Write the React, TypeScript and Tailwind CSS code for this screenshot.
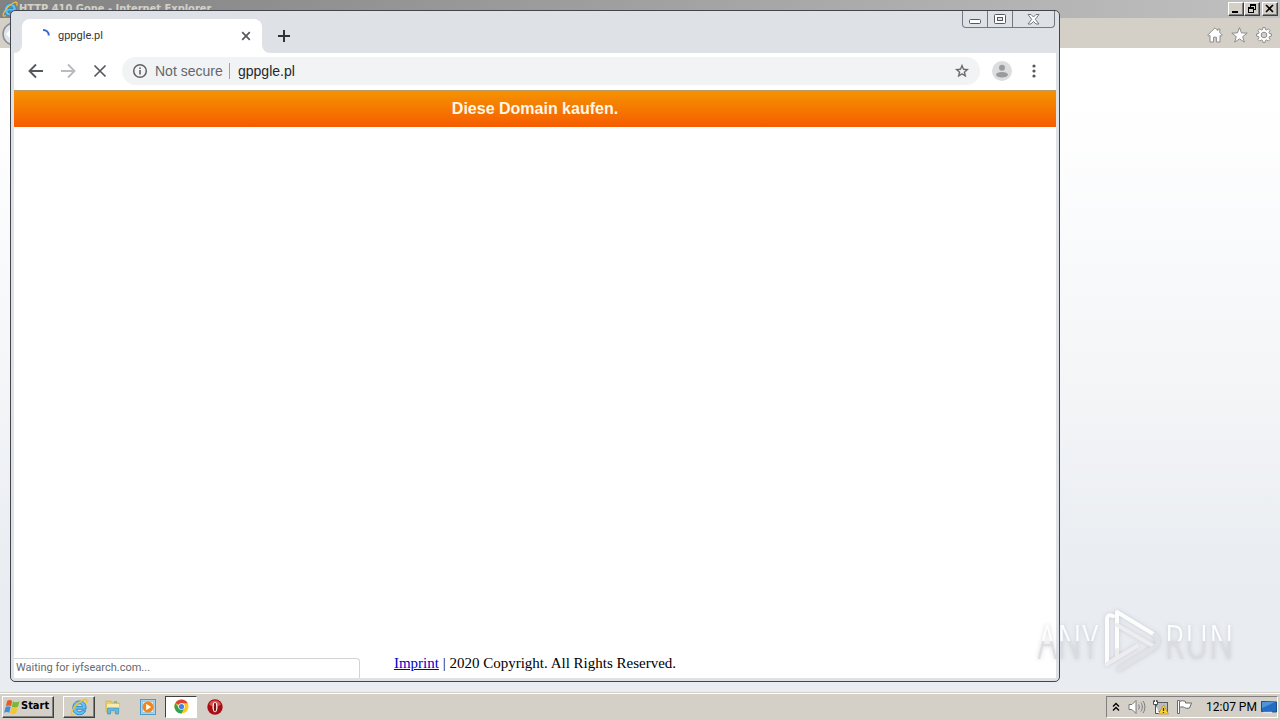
import React from "react";

const bevel =
  "border border-t-white border-l-white border-r-[#404040] border-b-[#404040] shadow-[inset_-1px_-1px_0_#808080] bg-[#d4d0c8]";

function InternetExplorerIcon({ className }: { className: string }) {
  return (
    <svg viewBox="0 0 18 18" className={className} aria-hidden="true">
      <path d="M16 11.200H6.600c.2 1.700 1.300 2.600 2.900 2.600 1.100 0 1.900-.4 2.400-1.100h3.700c-.9 2.600-3.200 4.100-6.100 4.100-4 0-6.700-2.700-6.700-6.900s2.700-7 6.700-7c4.400 0 7 3.200 6.500 8.300zM6.600 8.600h5.800c-.2-1.800-1.300-2.800-2.900-2.800s-2.700 1-2.900 2.800z" fill="#62c0f2" stroke="#1b7fc4" strokeWidth=".8" />
      <path d="M3.700 16.600c-2.500 1-3-.9-1.700-3.400C3.900 9.300 8.800 4.200 13.200 2c3.400-1.600 4.500-.2 3.300 2.700" fill="none" stroke="#f2c230" strokeWidth="1.400" strokeLinecap="round" />
    </svg>
  );
}

function StartFlag() {
  return (
    <svg viewBox="0 0 16 16" className="h-4 w-4" aria-hidden="true">
      <path d="M3.200 1.800C5 .7 6.700 1 8.300 2L7 7.300C5.400 6.300 3.700 6.200 1.900 7.200z" fill="#ea5b23" />
      <path d="M9 2.600c1.800 1 3.800 1 6.500-.3L14 7.700c-2.200 1-4.200 1-6.300 0z" fill="#79b837" />
      <path d="M1.600 8c1.800-1 3.500-.9 5.100.1l-1.500 5.700c-1.600-1-3.300-1-5.100 0z" fill="#3e8fdd" />
      <path d="M7.500 8.500c1.900 1 3.900 1 6.200 0l-1.600 5.700c-2.100 1-4.100 1-6.100 0z" fill="#f5c52d" />
    </svg>
  );
}

function ExplorerWindow() {
  return (
    <section className="flex min-h-0 flex-1 flex-col" aria-label="Internet Explorer">
      <header className="flex h-[18px] shrink-0 items-center justify-between bg-linear-to-r from-[#828282] to-[#c0c0c0] pr-[2px] pl-[2px]">
        <div className="flex items-center gap-px">
          <InternetExplorerIcon className="h-4 w-4" />
          <h1 className="text-[11px] leading-4 font-bold whitespace-nowrap text-[#d4d0c8] [font-family:'DejaVu_Sans_Condensed','DejaVu_Sans',sans-serif]">
            HTTP 410 Gone - Internet Explorer
          </h1>
        </div>
        <div className="flex">
          <button aria-label="Minimize" className={`flex h-[14px] w-4 items-center justify-center ${bevel}`}>
            <svg viewBox="0 0 12 10" className="h-[10px] w-3"><path d="M2 7h6v2H2z" /></svg>
          </button>
          <button aria-label="Restore" className={`flex h-[14px] w-4 items-center justify-center ${bevel}`}>
            <svg viewBox="0 0 12 10" className="h-[10px] w-3" shapeRendering="crispEdges">
              <path d="M4 0h6v6H8V5h1V2H5v1H4zM2 3h6v6H2zM3 5v3h4V5z" fillRule="evenodd" />
            </svg>
          </button>
          <button aria-label="Close" className={`ml-[2px] flex h-[14px] w-4 items-center justify-center ${bevel}`}>
            <svg viewBox="0 0 12 10" className="h-[10px] w-3"><path d="m2 1 7 7m0-7L2 8" stroke="#000" strokeWidth="1.600" /></svg>
          </button>
        </div>
      </header>

      <div className="flex h-[30px] shrink-0 items-center justify-between bg-[#d4d0c8] pr-2">
        <button aria-label="Back" className="h-6 w-6">
          <svg viewBox="0 0 24 24" className="h-6 w-6">
            <circle cx="14" cy="13" r="11" fill="#dce3eb" stroke="#8c8c8c" strokeWidth="1.500" />
            <path d="m14 7-6 6 6 6M8 13h12" fill="none" stroke="#fff" strokeWidth="3" />
          </svg>
        </button>
        <div className="mt-1 flex gap-2 text-[#858585]">
          <button aria-label="Home">
            <svg viewBox="0 0 16 16" className="h-4 w-4" fill="#fff" stroke="currentColor" strokeWidth=".9">
              <path d="M8 .8.700 8.100l1.300 1.200 1-.9V15h3.600v-4.800h2.800V15H13V8.400l1 .9 1.300-1.200-2.500-2.500V2h-2v1.600z" />
            </svg>
          </button>
          <button aria-label="Favorites">
            <svg viewBox="0 0 17 16" className="h-4 w-[17px]" fill="#fff" stroke="currentColor" strokeWidth=".9">
              <path d="m8.500.7 2 5.200 5.700.2-4.500 3.500 1.600 5.500-4.800-3.200-4.800 3.200 1.600-5.500L.8 6.100l5.700-.2z" />
            </svg>
          </button>
          <button aria-label="Tools">
            <svg viewBox="0 0 16 16" className="h-4 w-4">
              <path
                d="M6.800.6h2.400l.3 2 1.300.5 1.600-1.200 1.700 1.700-1.200 1.600.5 1.300 2 .3v2.400l-2 .3-.5 1.300 1.200 1.600-1.700 1.700-1.600-1.200-1.300.5-.3 2H6.800l-.3-2-1.300-.5-1.600 1.200-1.700-1.700 1.200-1.600-.5-1.300-2-.3V6.800l2-.3.5-1.300-1.200-1.600 1.700-1.700 1.600 1.200 1.300-.5zM8 5.200a2.800 2.800 0 1 0 0 5.600 2.800 2.800 0 0 0 0-5.600z"
                fill="#fff"
                stroke="#858585"
                strokeWidth=".9"
                fillRule="evenodd"
              />
            </svg>
          </button>
        </div>
      </div>

      <div className="flex-1 bg-linear-to-b from-white from-8% via-[#f4f6f8] via-50% to-[#e9ecf0] to-85%" />
    </section>
  );
}

function ChromeWindow() {
  return (
    <section
      aria-label="Chrome"
      className="absolute top-[10px] right-[220px] bottom-[38px] left-[10px] flex flex-col overflow-hidden rounded-[5px] border border-[#41454d] bg-[#dee1e6] px-[3px] pb-[3px]"
    >
      <header className="flex h-[42px] shrink-0 items-end justify-between">
        <div className="flex items-end">
          <svg viewBox="0 0 8 8" className="h-2 w-2" aria-hidden="true"><path d="M8 0v8H0a8 8 0 0 0 8-8z" fill="#fff" /></svg>
          <div className="flex h-[34px] w-60 items-center rounded-t-lg bg-white pr-[11px] pl-4">
            <svg viewBox="0 0 16 16" className="h-4 w-4" aria-hidden="true">
              <path d="M5 2c3.300 0 5.800 2.300 5.800 5.500" fill="none" stroke="#3569cc" strokeWidth="2" />
            </svg>
            <span className="ml-1 flex-1 text-[11px] text-[#33363a] [font-family:Roboto,sans-serif]">gppgle.pl</span>
            <button aria-label="Close tab">
              <svg viewBox="0 0 10 10" className="h-[10px] w-[10px]"><path d="m1.200 1.200 7.600 7.600m0-7.600L1.200 8.800" stroke="#55585c" strokeWidth="1.700" /></svg>
            </button>
          </div>
          <svg viewBox="0 0 8 8" className="h-2 w-2" aria-hidden="true"><path d="M0 0v8h8a8 8 0 0 1-8-8z" fill="#fff" /></svg>
          <button aria-label="New tab" className="mb-[11px] ml-2">
            <svg viewBox="0 0 12 12" className="h-3 w-3"><path d="M6 0v12M0 6h12" stroke="#2f3237" strokeWidth="2" /></svg>
          </button>
        </div>
        <div className="mr-px flex h-[17px] self-start rounded-b-[4px] border border-t-0 border-[#75797f]">
          <button aria-label="Minimize" className="flex w-[25px] items-center justify-center border-r border-[#75797f]">
            <svg viewBox="0 0 13 13" className="h-[13px] w-[13px]"><rect x=".5" y="6.500" width="11" height="4" rx="1" fill="#fff" stroke="#55595f" /></svg>
          </button>
          <button aria-label="Maximize" className="flex w-[25px] items-center justify-center border-r border-[#75797f]">
            <svg viewBox="0 0 13 11" className="h-[11px] w-[13px]">
              <rect x=".5" y=".5" width="11" height="9" rx="1" fill="#fff" stroke="#55595f" />
              <rect x="3.500" y="3.500" width="5" height="3" fill="#dee1e6" stroke="#55595f" />
            </svg>
          </button>
          <button aria-label="Close" className="flex w-[41px] items-center justify-center">
            <svg viewBox="0 0 13 11" className="h-[11px] w-[13px]">
              <path d="M1 .5h3L6.500 3 9 .500h3L8.300 5.300l3.700 4.700H9L6.500 7.500 4 10H1l3.700-4.700z" fill="#fff" stroke="#666a70" strokeWidth=".9" />
            </svg>
          </button>
        </div>
      </header>

      <nav className="flex h-[37px] shrink-0 items-center bg-white pr-[14px] pb-px pl-[14px]">
        <div className="flex items-center gap-4">
          <button aria-label="Back">
            <svg viewBox="0 0 16 16" className="h-4 w-4"><path d="M8 1.500 1.500 8 8 14.500M1.500 8H15" fill="none" stroke="#55585c" strokeWidth="1.900" /></svg>
          </button>
          <button aria-label="Forward">
            <svg viewBox="0 0 16 16" className="h-4 w-4"><path d="M8 1.500 14.500 8 8 14.500M14.500 8H1" fill="none" stroke="#b9bbbe" strokeWidth="1.900" /></svg>
          </button>
          <button aria-label="Stop loading">
            <svg viewBox="0 0 16 16" className="h-4 w-4"><path d="m2.500 2.500 11 11m0-11-11 11" stroke="#55585c" strokeWidth="1.700" /></svg>
          </button>
        </div>
        <div className="ml-[14px] flex h-7 flex-1 items-center rounded-full bg-[#f1f3f4] px-[10px] text-[14px] [font-family:'Liberation_Sans',sans-serif]">
          <svg viewBox="0 0 16 16" className="h-4 w-4" aria-hidden="true">
            <circle cx="8" cy="8" r="6.300" fill="none" stroke="#5f6368" strokeWidth="1.500" />
            <path d="M7.200 7h1.600v4.500H7.200zM7.200 4.400h1.600V6H7.200z" fill="#5f6368" />
          </svg>
          <label htmlFor="address" className="ml-[7px] w-[66px] whitespace-nowrap text-[#63676c]">Not secure</label>
          <span className="mx-2 h-4 w-px bg-[#9da0a4]" />
          <input id="address" defaultValue="gppgle.pl" className="min-w-0 flex-1 bg-transparent text-[#25282c] outline-none" />
          <button aria-label="Bookmark this page">
            <svg viewBox="0 0 24 24" className="h-4 w-4" fill="#5f6368">
              <path d="m22 9.240-7.190-.62L12 2 9.190 8.630 2 9.240l5.460 4.730L5.820 21 12 17.270 18.180 21l-1.630-7.030zM12 15.400l-3.760 2.270 1-4.280-3.320-2.880 4.380-.38L12 6.100l1.710 4.040 4.380.38-3.320 2.880 1 4.280z" stroke="#5f6368" strokeWidth=".4" />
            </svg>
          </button>
        </div>
        <button aria-label="Profile" className="ml-3">
          <svg viewBox="0 0 20 20" className="h-5 w-5">
            <circle cx="10" cy="10" r="10" fill="#dcdddf" />
            <circle cx="10" cy="6.700" r="3" fill="#9a9b9d" />
            <ellipse cx="10" cy="13.700" rx="6" ry="2.800" fill="#9a9b9d" />
          </svg>
        </button>
        <button aria-label="Menu" className="ml-[14px]">
          <svg viewBox="0 0 16 16" className="h-4 w-4" fill="#55585c">
            <circle cx="8" cy="3" r="1.600" /><circle cx="8" cy="8" r="1.600" /><circle cx="8" cy="13" r="1.600" />
          </svg>
        </button>
      </nav>

      <main className="relative flex min-h-0 flex-1 flex-col justify-between bg-white">
        <a href="#buy" className="flex h-[37px] items-center justify-center border-t border-[#c19a62] bg-linear-to-b from-[#f59200] to-[#f55b00] text-[16px] font-bold text-[#fff7e8] [font-family:'Liberation_Sans',sans-serif]">
          Diese Domain kaufen.
        </a>
        <p className="pb-[5px] text-center text-[15px] leading-5 text-black [font-family:'Liberation_Serif',serif]">
          <a href="#imprint" className="text-[#0000c8] underline">Imprint</a> | 2020 Copyright. All Rights Reserved.
        </p>
        <div role="status" className="absolute bottom-0 left-0 flex h-5 w-[346px] items-center rounded-tr-[4px] border-t border-r border-[#d2d3d5] bg-white pl-[2px] text-[11px] text-[#66696d] [font-family:Roboto,sans-serif]">
          Waiting for iyfsearch.com...
        </div>
      </main>
    </section>
  );
}

function Watermark() {
  const word =
    "bg-linear-to-b from-white from-50% to-[#dadbdf] to-50% bg-clip-text text-center text-[48px] leading-[60px] text-transparent [font-family:'Open_Sans_Condensed_Light','Open_Sans_Condensed','Noto_Sans_ExtraCondensed','Roboto_Condensed','Liberation_Sans',sans-serif]";
  return (
    <div className="pointer-events-none absolute right-[46px] bottom-[46px] flex items-center gap-1 opacity-90 drop-shadow-[0_0_2px_#a0a0b080]">
      <span className={word}>ANY</span>
      <svg viewBox="0 0 58 66" className="h-[66px] w-[58px]" fill="none" strokeLinejoin="round" strokeLinecap="round" aria-hidden="true">
        <path d="M11 8c-4-2-6 0-6 3v45M15 42V4l38 23" stroke="#fff" strokeWidth="4" />
        <path d="M15 17l38 22M5 56l30-18M15 42v7" stroke="#eeeef1" strokeWidth="4" />
        <path d="M17 61l36-22c4-3 4-8 0-12" stroke="#e0e1e5" strokeWidth="5" />
      </svg>
      <span className={word}>RUN</span>
    </div>
  );
}

function Taskbar() {
  return (
    <footer className="flex h-7 shrink-0 items-center justify-between border-t border-[#d4d0c8] bg-[#d4d0c8] pr-[2px] pl-[2px] shadow-[inset_0_1px_0_#fff] [font-family:'DejaVu_Sans_Condensed','DejaVu_Sans',sans-serif]">
      <div className="flex items-center">
        <button className={`flex h-[22px] w-[52px] items-center gap-px pl-px text-[11px] font-bold ${bevel}`}>
          <StartFlag />
          Start
        </button>
        <button aria-label="Internet Explorer" className={`ml-[9px] flex h-[22px] w-8 items-center justify-center ${bevel}`}>
          <InternetExplorerIcon className="h-[18px] w-[18px]" />
        </button>
        <button aria-label="File Explorer" className="flex h-[22px] w-[35px] items-center justify-center pl-px">
          <svg viewBox="0 0 16 16" className="h-4 w-4">
            <path d="M1 2h5l1 2h7v9H1z" fill="#e8ce70" stroke="#c9a942" strokeWidth=".6" />
            <path d="M2 5h12v8H2z" fill="#f9ebac" />
            <path d="M2.500 15V9h11v6h-3v-3h-5v3z" fill="#67b7df" stroke="#3a91c0" strokeWidth=".7" />
            <path d="M9 3h3" stroke="#66ad56" strokeWidth="1.200" />
          </svg>
        </button>
        <button aria-label="Media Player" className="flex h-[22px] w-[35px] items-center justify-center">
          <svg viewBox="0 0 16 16" className="h-4 w-4">
            <rect x=".5" y=".5" width="15" height="15" fill="#a9d2ee" stroke="#4c9ac9" />
            <rect x="2.500" y="2.500" width="11" height="11" fill="#dceefa" stroke="#7db9df" strokeWidth=".6" />
            <circle cx="8" cy="8" r="5.500" fill="#f18616" />
            <path d="m6.200 4.800 5 3.200-5 3.200z" fill="#fff" />
          </svg>
        </button>
        <button aria-label="Chrome" className="flex h-[22px] w-8 items-center justify-center border border-t-[#404040] border-r-white border-b-white border-l-[#404040] bg-white">
          <svg viewBox="0 0 16 16" className="h-[15px] w-[15px]">
            <circle cx="8" cy="8" r="7.500" fill="#fbc924" />
            <path d="M8 8 1.500 4.250A7.500 7.500 0 0 1 14.500 4.250L14.600 4.600H8z" fill="#df4334" />
            <path d="M1.500 4.250A7.500 7.500 0 0 0 8 15.500L11 9.700 5 9.700z" fill="#32a350" />
            <circle cx="8" cy="8" r="3.500" fill="#fff" />
            <circle cx="8" cy="8" r="2.800" fill="#4383e5" />
          </svg>
        </button>
        <button aria-label="Opera" className="ml-[10px]">
          <svg viewBox="0 0 16 16" className="h-4 w-4">
            <circle cx="8" cy="8" r="7.700" fill="#a90e14" />
            <path d="M2 5.500a6.500 6.500 0 0 1 12 0C11 8 5 8 2 5.500z" fill="#d9534f" />
            <ellipse cx="8" cy="8" rx="2.500" ry="5.300" fill="#fff" />
            <ellipse cx="8" cy="8" rx="1.200" ry="4.500" fill="#8b0d12" />
          </svg>
        </button>
      </div>

      <div className="flex h-[22px] w-[172px] items-center border border-t-[#808080] border-r-white border-b-white border-l-[#808080] pl-[5px]">
        <button aria-label="Show hidden icons">
          <svg viewBox="0 0 8 10" className="h-[10px] w-2"><path d="M1 4.500 4 1.500l3 3M1 8.500l3-3 3 3" fill="none" stroke="#000" strokeWidth="1.400" /></svg>
        </button>
        <button aria-label="Volume" className="ml-2">
          <svg viewBox="0 0 18 16" className="h-4 w-[18px]" fill="none" stroke="#77797c">
            <path d="M1 5.500h3L8 1.500v13l-4-4H1z" fill="#fff" />
            <path d="M10.500 5.500c1 1.500 1 3.500 0 5M12.800 3.500c2 2.500 2 6.500 0 9M15 2c2.500 3.500 2.500 8.500 0 12" />
          </svg>
        </button>
        <button aria-label="Network" className="ml-[6px]">
          <svg viewBox="0 0 17 16" className="h-4 w-[17px]">
            <rect x="4.500" y="3.500" width="11" height="9" fill="#b9bdc2" stroke="#585b5f" />
            <path d="M1.500 1.500v4h4v-4M3.500 5.500v9h4M2.500 1v2M4.500 1v2" fill="#fff" stroke="#4e5155" />
            <path d="m11.500 6 5 9h-10z" fill="#ffd52d" stroke="#b79113" strokeWidth=".7" />
            <path d="M11.500 9v3M11.500 13v1" stroke="#463300" strokeWidth="1.300" />
          </svg>
        </button>
        <button aria-label="Action Center" className="ml-[7px]">
          <svg viewBox="0 0 17 16" className="h-4 w-[17px]" fill="#fff" stroke="#686a6d">
            <path d="M1.500 1.500h2v13h-2z" />
            <path d="M3.500 2.500c2-1 4-1 6 0v1.500h6L13.500 9c-2 .5-3.500.5-5-.5-1.500-.8-3.500-.8-5 0z" />
          </svg>
        </button>
        <time className="ml-[13px] flex-1 text-[12px] whitespace-nowrap [font-family:Roboto,sans-serif]">12:07 PM</time>
        <button aria-label="Show desktop">
          <svg viewBox="0 0 16 14" className="h-[14px] w-4">
            <path d="m.5 1.500 15 .5v10l-15-.5z" fill="#266dc0" stroke="#164d8c" />
            <path d="M1 2h13L1 8z" fill="#4d94dc" />
            <path d="M2 12.500h9" stroke="#d5e4f3" strokeWidth="1.500" />
          </svg>
        </button>
      </div>
    </footer>
  );
}

export default function App() {
  return (
    <div className="relative flex h-screen flex-col overflow-hidden bg-[#e9ecf0] [font-family:'Liberation_Sans',sans-serif]">
      <ExplorerWindow />
      <ChromeWindow />
      <Watermark />
      <Taskbar />
    </div>
  );
}
